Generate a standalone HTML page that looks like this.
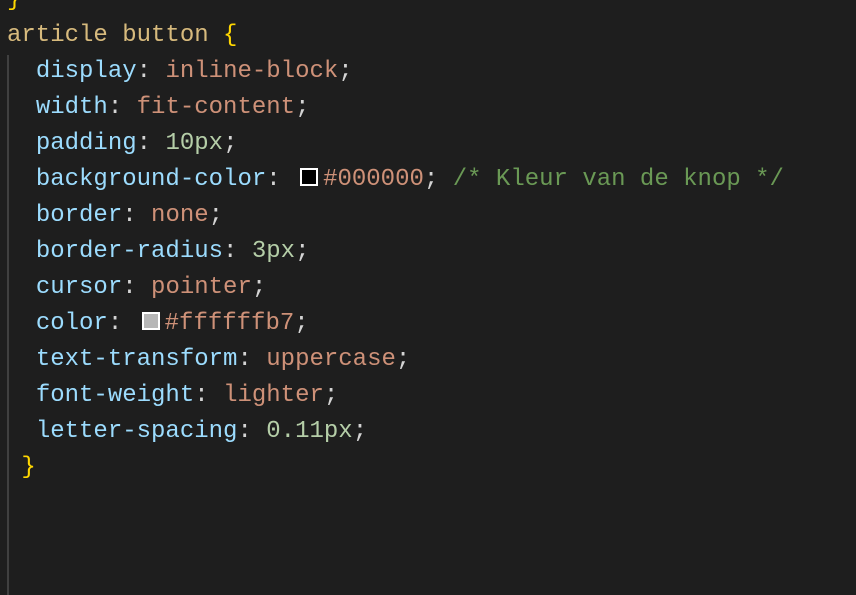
<!DOCTYPE html>
<html><head><style>
html,body{margin:0;padding:0;background:#1e1e1e;width:856px;height:588px;overflow:hidden}
.code{position:absolute;left:7px;top:-18px;font-family:"Liberation Mono",monospace;font-size:24px;line-height:36px;white-space:pre;color:#d4d4d4}
.s{color:#d7ba7d}.b{color:#ffd700}.p{color:#9cdcfe}.v{color:#ce9178}.n{color:#b5cea8}.c{color:#6a9955}
.sw{display:inline-block;width:14px;height:14px;border:2px solid #fff;vertical-align:-1px;margin:0 5px 0 5px}
.guide{position:absolute;left:7px;top:55px;width:2px;height:540px;background:#404040}
</style></head><body>
<div class="guide"></div>
<div class="code"><span class="b">}</span>
<span class="s">article button</span> <span class="b">{</span>
  <span class="p">display</span>: <span class="v">inline-block</span>;
  <span class="p">width</span>: <span class="v">fit-content</span>;
  <span class="p">padding</span>: <span class="n">10px</span>;
  <span class="p">background-color</span>: <span class="sw" style="background:#000"></span><span class="v">#000000</span>; <span class="c">/* Kleur van de knop */</span>
  <span class="p">border</span>: <span class="v">none</span>;
  <span class="p">border-radius</span>: <span class="n">3px</span>;
  <span class="p">cursor</span>: <span class="v">pointer</span>;
  <span class="p">color</span>: <span class="sw" style="background:#b7b7b7"></span><span class="v">#ffffffb7</span>;
  <span class="p">text-transform</span>: <span class="v">uppercase</span>;
  <span class="p">font-weight</span>: <span class="v">lighter</span>;
  <span class="p">letter-spacing</span>: <span class="n">0.11px</span>;
 <span class="b">}</span></div>
</body></html>
